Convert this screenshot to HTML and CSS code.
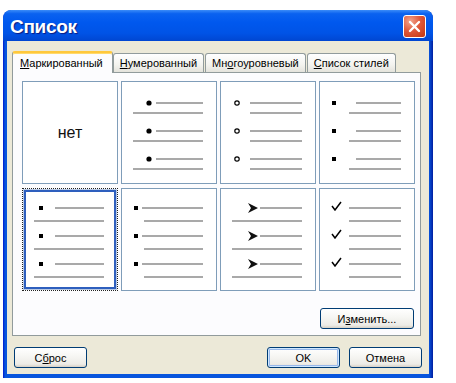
FILE: index.html
```html
<!DOCTYPE html>
<html lang="ru">
<head>
  <meta charset="UTF-8">
  <title>Список</title>
  <link rel="stylesheet" href="styles.css">
</head>
<body>

  <div class="window">
    <div class="titlebar">
      <span class="title">Список</span>
      <button class="close-btn" aria-label="Закрыть">
        <svg width="13" height="13" viewBox="0 0 13 13">
          <path d="M2 2 L11 11 M11 2 L2 11" stroke="#fff" stroke-width="2.4" stroke-linecap="round"/>
        </svg>
      </button>
    </div>

    <div class="client">
      <!-- Tabs -->
      <div class="tabs">
        <div class="tab active"><u>М</u>аркированный</div>
        <div class="tab"><u>Н</u>умерованный</div>
        <div class="tab">Мн<u>о</u>гоуровневый</div>
        <div class="tab"><u>С</u>писок стилей</div>
      </div>

      <div class="panel">
        <div class="grid">
          <div class="cell none">нет</div>

          <div class="cell">
            <svg width="94" height="101" viewBox="0 0 94 101">
              <g class="lines">
                <path d="M34 21H81M11 31H81M34 49H81M11 59H81M34 77H81M11 87H81"/>
              </g>
              <circle cx="27" cy="21" r="2.6"/>
              <circle cx="27" cy="49" r="2.6"/>
              <circle cx="27" cy="77" r="2.6"/>
            </svg>
          </div>

          <div class="cell">
            <svg width="94" height="101" viewBox="0 0 94 101">
              <g class="lines">
                <path d="M29 21H81M29 31H81M29 49H81M29 59H81M29 77H81M29 87H81"/>
              </g>
              <g fill="none" stroke="#000" stroke-width="1.2">
                <circle cx="16" cy="21" r="2.2"/>
                <circle cx="16" cy="49" r="2.2"/>
                <circle cx="16" cy="77" r="2.2"/>
              </g>
            </svg>
          </div>

          <div class="cell">
            <svg width="94" height="101" viewBox="0 0 94 101">
              <g class="lines">
                <path d="M36 21H81M29 31H81M36 49H81M29 59H81M36 77H81M29 87H81"/>
              </g>
              <rect x="12" y="19" width="4" height="4"/>
              <rect x="12" y="47" width="4" height="4"/>
              <rect x="12" y="75" width="4" height="4"/>
            </svg>
          </div>

          <div class="cell selected">
            <svg width="94" height="101" viewBox="0 0 94 101">
              <g class="lines">
                <path d="M32 19H81M11 32H81M32 47H81M11 60H81M32 75H81M11 88H81"/>
              </g>
              <rect x="16" y="17" width="4" height="4"/>
              <rect x="16" y="45" width="4" height="4"/>
              <rect x="16" y="73" width="4" height="4"/>
            </svg>
          </div>

          <div class="cell">
            <svg width="94" height="101" viewBox="0 0 94 101">
              <g class="lines">
                <path d="M20 19H81M22 32H81M20 47H81M22 60H81M20 75H81M22 88H81"/>
              </g>
              <rect x="12" y="17" width="4" height="4"/>
              <rect x="12" y="45" width="4" height="4"/>
              <rect x="12" y="73" width="4" height="4"/>
            </svg>
          </div>

          <div class="cell">
            <svg width="94" height="101" viewBox="0 0 94 101">
              <g class="lines">
                <path d="M39 19H81M11 32H81M39 47H81M11 60H81M39 75H81M11 88H81"/>
              </g>
              <g fill="#111">
                <path d="M27 14L37 19L27 24L30 19Z"/>
                <path d="M27 42L37 47L27 52L30 47Z"/>
                <path d="M27 70L37 75L27 80L30 75Z"/>
              </g>
            </svg>
          </div>

          <div class="cell">
            <svg width="94" height="101" viewBox="0 0 94 101">
              <g class="lines">
                <path d="M29 19H81M29 32H81M29 47H81M29 60H81M29 75H81M29 88H81"/>
              </g>
              <g fill="none" stroke="#000" stroke-width="1.5">
                <path d="M12 17L15 21L21 13"/>
                <path d="M12 45L15 49L21 41"/>
                <path d="M12 73L15 77L21 69"/>
              </g>
            </svg>
          </div>
        </div>

        <div class="panel-actions">
          <button class="btn">И<u>з</u>менить...</button>
        </div>
      </div>

      <div class="footer">
        <button class="btn">С<u>б</u>рос</button>
        <div class="footer-right">
          <button class="btn default">OK</button>
          <button class="btn">Отмена</button>
        </div>
      </div>
    </div>
  </div>

</body>
</html>
```

FILE: styles.css
```css
body {
  margin: 0;
  padding: 0;
  background-color: #fff;
  font-family: "Liberation Sans", Arial, sans-serif;
  font-size: 11px;
  color: #000;
}

.window {
  width: 430px;
  height: 368px;
  margin: 10px 0 0 3px;
  box-sizing: border-box;
  display: flex;
  flex-direction: column;
  border-radius: 8px 8px 0 0;
  background: linear-gradient(to right, #0019cf, #0855dd 2px, #0855dd 426px, #001ea0);
  overflow: hidden;
}

.titlebar {
  height: 31px;
  flex-shrink: 0;
  display: flex;
  align-items: center;
  justify-content: space-between;
  padding: 0 7px 0 7px;
  background: linear-gradient(to bottom, #3b8cf8 0%, #0a62f0 12%, #0058ee 40%, #0053e6 75%, #0046d1 100%);
  border-radius: 8px 8px 0 0;
}

.title {
  color: #fff;
  font-weight: bold;
  font-size: 19px;
  letter-spacing: -0.3px;
  text-shadow: 1px 1px 1px #0a1a80;
  padding-top: 2px;
}

.close-btn {
  width: 23px;
  height: 23px;
  padding: 0;
  border: 1px solid #fff;
  border-radius: 3px;
  background: radial-gradient(circle at 30% 25%, #f2a58e 0%, #e0593c 45%, #c2350f 100%);
  display: flex;
  align-items: center;
  justify-content: center;
  margin-top: 2px;
}

.client {
  flex: 1;
  margin: 0 4px 4px 4px;
  background-color: #ece9d8;
  padding: 10px 8px 0 5px;
  display: flex;
  flex-direction: column;
}

/* Tabs */
.tabs {
  display: flex;
  align-items: flex-end;
  height: 21px;
  padding-left: 2px;
}
.tab {
  height: 18px;
  line-height: 18px;
  padding: 0 6px;
  margin-right: 1px;
  border: 1px solid #919b9c;
  border-bottom: none;
  border-radius: 3px 3px 0 0;
  background: linear-gradient(to bottom, #fff, #f3f3ef 60%, #e4e3dc);
  white-space: nowrap;
}
.tab.active {
  position: relative;
  z-index: 1;
  height: 20px;
  line-height: 21px;
  padding: 0 9px 0 7px;
  margin: 0 0 -1px -2px;
  background: #fcfcfe;
  border-top: 2px solid #ffc83c;
  box-shadow: inset 0 1px 0 #ffd96b;
  border-radius: 3px 3px 0 0;
}
.tab u,
.btn u {
  text-decoration: underline;
}

.panel {
  height: 264px;
  box-sizing: border-box;
  border: 1px solid #919b9c;
  background-color: #fcfcfe;
  padding: 8px 0 0 9px;
}

.grid {
  display: grid;
  grid-template-columns: repeat(4, 96px);
  grid-template-rows: repeat(2, 103px);
  column-gap: 3px;
  row-gap: 4px;
}
.cell {
  border: 1px solid #7f9db9;
  background-color: #fff;
}
.cell svg {
  display: block;
}
.cell .lines path {
  stroke: #a9a9a9;
  stroke-width: 2;
  fill: none;
}
.cell.none {
  display: flex;
  align-items: center;
  justify-content: center;
  font-size: 16px;
  color: #111;
}
.cell.selected {
  border: 1px dotted #222;
  box-shadow: inset 0 0 0 1px #b9c9e3, inset 0 0 0 3px #2e5fbe;
}

.panel-actions {
  display: flex;
  justify-content: flex-end;
  margin: 17px 6px 0 0;
}

/* Buttons */
.btn {
  height: 21px;
  padding: 0;
  font-family: "Liberation Sans", Arial, sans-serif;
  font-size: 11px;
  color: #000;
  border: 1px solid #003c74;
  border-radius: 3px;
  background: linear-gradient(to bottom, #fff 0%, #f7f7f4 40%, #ecebe6 85%, #d6d0c5 100%);
  width: 73px;
  cursor: pointer;
}
.panel-actions .btn {
  width: 94px;
}
.btn.default {
  box-shadow: inset 0 0 0 1px #cee7ff, inset 0 0 0 2px #98b8ea;
}

.footer {
  display: flex;
  justify-content: space-between;
  margin: 11px -1px 0 2px;
}
.footer-right {
  display: flex;
  gap: 9px;
}
```
